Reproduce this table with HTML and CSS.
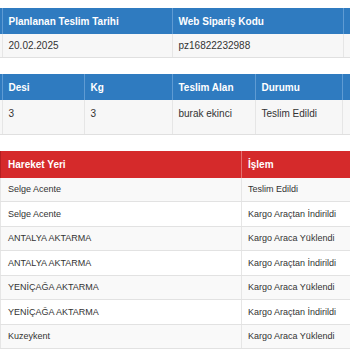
FILE: index.html
```html
<!DOCTYPE html>
<html lang="tr">
<head>
<meta charset="utf-8">
<link rel="stylesheet" href="styles.css">
</head>
<body>
<div class="page">
  <div class="wrap">
    <table class="tbl blue t1">
      <colgroup><col class="c-edge"><col class="c170"><col class="c171"><col class="c-rest"></colgroup>
      <thead><tr><th class="edge"></th><th>Planlanan Teslim Tarihi</th><th>Web Sipariş Kodu</th><th></th></tr></thead>
      <tbody><tr><td class="edge"></td><td>20.02.2025</td><td>pz16822232988</td><td></td></tr></tbody>
    </table>
  </div>
  <div class="wrap">
    <table class="tbl blue t2">
      <colgroup><col class="c-edge"><col class="c82"><col class="c88"><col class="c83"><col class="c87"><col class="c-rest"></colgroup>
      <thead><tr><th class="edge"></th><th>Desi</th><th>Kg</th><th>Teslim Alan</th><th>Durumu</th><th></th></tr></thead>
      <tbody><tr><td class="edge"></td><td>3</td><td>3</td><td>burak ekinci</td><td>Teslim Edildi</td><td></td></tr></tbody>
    </table>
  </div>
  <div class="wrap">
    <table class="tbl red t3">
      <colgroup><col class="c241"><col class="c-wide"></colgroup>
      <thead><tr><th>Hareket Yeri</th><th>İşlem</th></tr></thead>
      <tbody>
        <tr><td>Selge Acente</td><td>Teslim Edildi</td></tr>
        <tr><td>Selge Acente</td><td>Kargo Araçtan İndirildi</td></tr>
        <tr><td>ANTALYA AKTARMA</td><td>Kargo Araca Yüklendi</td></tr>
        <tr><td>ANTALYA AKTARMA</td><td>Kargo Araçtan İndirildi</td></tr>
        <tr><td>YENİÇAĞA AKTARMA</td><td>Kargo Araca Yüklendi</td></tr>
        <tr><td>YENİÇAĞA AKTARMA</td><td>Kargo Araçtan İndirildi</td></tr>
        <tr><td>Kuzeykent</td><td>Kargo Araca Yüklendi</td></tr>
      </tbody>
    </table>
  </div>
</div>
</body>
</html>
```
FILE: styles.css
```css
html, body {
  margin: 0;
  padding: 0;
  background: #fff;
}
body {
  font-family: "Liberation Sans", Arial, sans-serif;
  color: #333;
  overflow: hidden;
}
.page {
  display: flex;
  flex-direction: column;
  padding-top: 8px;
  gap: 16px;
}
.wrap {
  width: 350px;
  overflow: hidden;
}
.tbl {
  border-collapse: collapse;
  table-layout: fixed;
}
.t1 { width: 443px; }
.t2 { width: 442px; }
.t3 { width: 500px; }
.c-edge { width: 2px; }
.c170 { width: 170px; }
.c171 { width: 171px; }
.c82 { width: 82px; }
.c88 { width: 88px; }
.c83 { width: 83px; }
.c87 { width: 87px; }
.c-rest { width: 100px; }
.c241 { width: 241px; }
.c-wide { width: 259px; }

.tbl th {
  text-align: left;
  font-weight: bold;
  color: #fff;
  padding: 0 6px;
  white-space: nowrap;
}
.tbl td {
  padding: 0 6px;
  white-space: nowrap;
}
.tbl .edge { padding: 0; }

.blue th {
  background: #2f7bc0;
  height: 26px;
  font-size: 10px;
  border-left: 1px solid #5f9bd3;
}
.blue th:first-child { border-left: none; }
.blue td {
  background: #f7f7f7;
  font-size: 10px;
  border-left: 1px solid #e6e6e6;
  border-bottom: 1px solid #e0e0e0;
}
.blue td:first-child { border-left: none; }
.t1 td { height: 23px; }
.t2 td {
  height: 34px;
  vertical-align: top;
  padding-top: 8px;
  box-sizing: border-box;
}
.t2 td.edge { padding: 0; }

.red th {
  background: #d52a2b;
  height: 27px;
  font-size: 10px;
  border-left: 1px solid #e5706f;
}
.red th:first-child { border-left: 1px solid #b51f20; padding-left: 7px; }
.red td {
  font-size: 9px;
  height: 23.5px;
  border-left: 1px solid #e6e6e6;
  border-bottom: 1px solid #e2e2e2;
  background: #fff;
}
.red td:first-child { border-left: 1px solid #e6e6e6; padding-left: 7px; }
.red tbody tr:nth-child(odd) td { background: #f9f9f9; }
```
